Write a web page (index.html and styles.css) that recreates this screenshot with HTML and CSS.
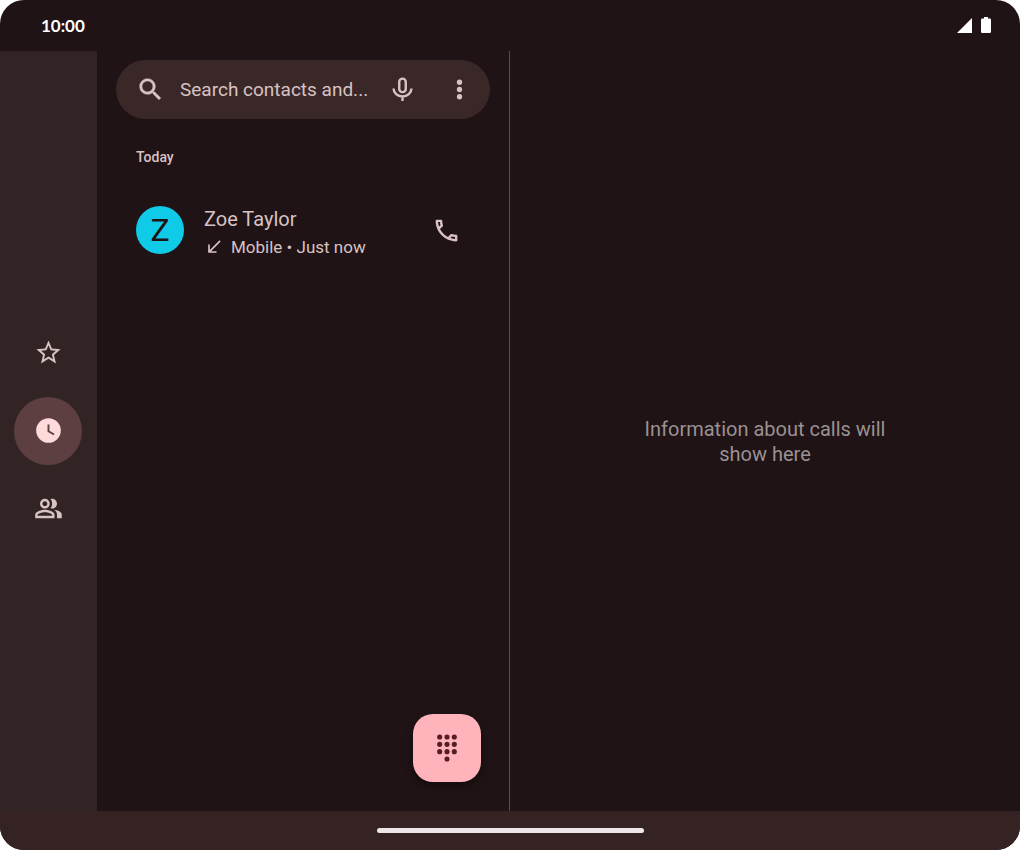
FILE: index.html
```html
<!DOCTYPE html>
<html lang="en">
<head>
  <meta charset="UTF-8" />
  <meta name="viewport" content="width=device-width, initial-scale=1.0"/>
  <title>Phone</title>
  <link rel="stylesheet" href="styles.css">
</head>
<body>

<div class="device">
  <header class="status-bar">
    <time class="clock">10:00</time>
    <div class="status-icons">
      <svg class="signal" viewBox="0 0 15 15"><path d="M15 0v15H0z"/></svg>
      <svg class="battery" viewBox="0 0 10 16"><path d="M3 0h4v1.5h1.8q1.2 0 1.2 1.2v12.1q0 1.2-1.2 1.2H1.2Q0 16 0 14.8V2.7q0-1.2 1.2-1.2H3z"/></svg>
    </div>
  </header>

  <div class="content">
    <nav class="rail">
      <a href="#favorites" aria-label="Favorites">
        <svg class="icon" viewBox="0 0 24 24"><path d="M22 9.24l-7.19-.62L12 2 9.19 8.63 2 9.24l5.46 4.73L5.82 21 12 17.27 18.18 21l-1.63-7.03L22 9.24zM12 15.4l-3.76 2.27 1-4.28-3.32-2.88 4.38-.38L12 6.1l1.71 4.04 4.38.38-3.32 2.88 1 4.28L12 15.4z"/></svg>
      </a>
      <a href="#recents" class="active" aria-label="Recents">
        <svg class="icon" viewBox="0 0 24 24"><path fill-rule="evenodd" d="M12 1.8a10.2 10.2 0 1 0 0 20.4 10.2 10.2 0 0 0 0-20.4zM11.2 7h1.6v5.2l4.2 2.5-.8 1.3-5-3z"/></svg>
      </a>
      <a href="#contacts" aria-label="Contacts">
        <svg class="icon" viewBox="0 0 24 24"><path d="M16.67 13.13C18.04 14.06 19 15.32 19 17v3h4v-3c0-2.18-3.57-3.47-6.33-3.87zM15 12c2.21 0 4-1.79 4-4s-1.79-4-4-4c-.47 0-.91.1-1.33.24C14.5 5.27 15 6.58 15 8s-.5 2.73-1.33 3.76c.42.14.86.24 1.33.24zM9 12c2.21 0 4-1.79 4-4s-1.79-4-4-4-4 1.79-4 4 1.79 4 4 4zm0-6c1.1 0 2 .9 2 2s-.9 2-2 2-2-.9-2-2 .9-2 2-2zM9 13c-2.67 0-8 1.34-8 4v3h16v-3c0-2.66-5.33-4-8-4zm6 5H3v-.99C3.2 16.29 6.3 15 9 15s5.8 1.29 6 2v1z"/></svg>
      </a>
    </nav>

    <main class="call-list">
      <form class="search" role="search">
        <svg class="icon" viewBox="0 0 24 24"><path stroke="currentColor" stroke-width=".4" d="M15.5 14h-.79l-.28-.27A6.471 6.471 0 0 0 16 9.5 6.5 6.5 0 1 0 9.5 16c1.61 0 3.09-.59 4.23-1.57l.27.28v.79l5 4.99L20.49 19l-4.99-5zm-6 0C7.01 14 5 11.99 5 9.5S7.01 5 9.5 5 14 7.01 14 9.5 11.99 14 9.5 14z"/></svg>
        <input type="text" placeholder="Search contacts and..." aria-label="Search contacts and places">
        <button type="button" aria-label="Voice search">
          <svg class="icon line" viewBox="0 0 24 24"><rect x="9.3" y="3" width="5.4" height="11.2" rx="2.7"/><path d="M4.6 11.2a7.4 6.6 0 0 0 14.8 0M12 17.8v3.7"/></svg>
        </button>
        <button type="button" aria-label="More options">
          <svg class="icon" viewBox="0 0 24 24"><circle cx="12" cy="6" r="2.2"/><circle cx="12" cy="12" r="2.2"/><circle cx="12" cy="18" r="2.2"/></svg>
        </button>
      </form>

      <h2>Today</h2>

      <div class="call">
        <div class="avatar">Z</div>
        <div class="call-info">
          <p class="name">Zoe Taylor</p>
          <p class="details">
            <svg class="incoming" viewBox="0 0 24 24"><path d="M20 5.41L18.59 4 7 15.59V9H5v10h10v-2H8.41z"/></svg>
            <span>Mobile • Just now</span>
          </p>
        </div>
        <button type="button" aria-label="Call Zoe Taylor">
          <svg class="icon" viewBox="0 0 24 24"><path d="M6.54 5c.06.89.21 1.76.45 2.59l-1.2 1.2c-.41-1.2-.67-2.47-.76-3.79h1.51m9.86 12.02c.85.24 1.72.39 2.6.45v1.49c-1.32-.09-2.59-.35-3.8-.75l1.2-1.19M7.5 3H4c-.55 0-1 .45-1 1 0 9.39 7.61 17 17 17 .55 0 1-.45 1-1v-3.49c0-.55-.45-1-1-1-1.24 0-2.45-.2-3.57-.57a.84.84 0 0 0-.31-.05c-.26 0-.51.1-.71.29l-2.2 2.2a15.149 15.149 0 0 1-6.59-6.59l2.2-2.2c.28-.28.36-.67.25-1.02A11.36 11.36 0 0 1 8.5 4c0-.55-.45-1-1-1z"/></svg>
        </button>
      </div>

      <button type="button" class="dialpad" aria-label="Dial pad">
        <svg viewBox="-0.3 -0.3 24.6 24.6">
          <circle cx="6" cy="3" r="2.1"/><circle cx="12" cy="3" r="2.1"/><circle cx="18" cy="3" r="2.1"/>
          <circle cx="6" cy="9" r="2.1"/><circle cx="12" cy="9" r="2.1"/><circle cx="18" cy="9" r="2.1"/>
          <circle cx="6" cy="15" r="2.1"/><circle cx="12" cy="15" r="2.1"/><circle cx="18" cy="15" r="2.1"/>
          <circle cx="12" cy="21" r="2.1"/>
        </svg>
      </button>
    </main>

    <section class="call-detail">
      <p>Information about calls will show here</p>
    </section>
  </div>

  <footer class="nav-bar">
    <div class="handle"></div>
  </footer>
</div>

</body>
</html>
```
FILE: styles.css
```css
* {
  margin: 0;
  padding: 0;
  box-sizing: border-box;
}

body {
  font-family: 'Roboto', sans-serif;
  background-color: #fff;
  color: #d8c2c2;
}

button {
  display: flex;
  align-items: center;
  justify-content: center;
  background: none;
  border: none;
  color: inherit;
  cursor: pointer;
}

svg {
  display: block;
  flex-shrink: 0;
  fill: currentColor;
}

.icon {
  width: 29px;
  height: 29px;
}

.line {
  fill: none;
  stroke: currentColor;
  stroke-width: 2;
}

.device {
  display: flex;
  flex-direction: column;
  min-height: 100vh;
  background-color: #1f1315;
  border-radius: 24px;
  overflow: hidden;
}

.status-bar {
  display: flex;
  justify-content: space-between;
  align-items: center;
  height: 51px;
  padding: 0 29px 1px 41px;
  color: #fff;
}

.clock {
  font-family: 'Lato', sans-serif;
  font-size: 17px;
  font-weight: bold;
}

.status-icons {
  display: flex;
  align-items: center;
  gap: 9px;
}

.signal {
  width: 15px;
  height: 15px;
}

.battery {
  width: 10px;
  height: 16px;
}

.content {
  display: flex;
  flex: 1;
}

.rail {
  display: flex;
  flex-direction: column;
  justify-content: center;
  align-items: center;
  gap: 10px;
  width: 97px;
  padding: 0 1px 1px 0;
  background-color: #322424;
}

.rail a {
  display: flex;
  align-items: center;
  justify-content: center;
  width: 68px;
  height: 68px;
  border-radius: 50%;
  color: #d8c2c2;
}

.rail a.active {
  background-color: #5d3f41;
  color: #ffdadb;
}

.call-list {
  display: flex;
  flex-direction: column;
  width: 413px;
  padding: 9px 19px 29px;
  border-right: 1px solid #5c4c4d;
}

.search {
  display: flex;
  align-items: center;
  height: 59px;
  padding: 0 16px 0 20px;
  background-color: #3a2829;
  border-radius: 30px;
}

.search input {
  flex: 1;
  min-width: 0;
  padding-left: 15px;
  font-family: inherit;
  font-size: 19px;
  color: inherit;
  background: none;
  border: none;
  outline: none;
  text-overflow: ellipsis;
}

.search input::placeholder {
  color: #d8c2c2;
  opacity: 1;
}

.search button {
  width: 29px;
  height: 48px;
}

.search button + button {
  margin-left: 28px;
}

h2 {
  padding: 28px 20px 0;
  font-size: 14px;
  line-height: 20px;
  font-weight: 500;
}

.call {
  display: flex;
  align-items: flex-start;
  gap: 20px;
  margin-top: 31px;
  padding: 8px 20px;
}

.avatar {
  display: flex;
  align-items: center;
  justify-content: center;
  width: 48px;
  height: 48px;
  border-radius: 50%;
  background-color: #0fcbe8;
  color: #201315;
  font-size: 32px;
}

.call-info {
  flex: 1;
}

.name {
  font-size: 20px;
  line-height: 26px;
}

.details {
  display: flex;
  align-items: center;
  gap: 7px;
  font-size: 17px;
  line-height: 30px;
}

.incoming {
  width: 20px;
  height: 20px;
}

.call button {
  width: 48px;
  height: 48px;
}

.dialpad {
  width: 68px;
  height: 68px;
  margin: auto 9px 0 auto;
  border-radius: 20px;
  background-color: #ffb3ba;
  color: #561d25;
  box-shadow: 0 4px 8px rgba(0, 0, 0, 0.4);
}

.dialpad svg {
  width: 30px;
  height: 30px;
}

.call-detail {
  display: flex;
  flex: 1;
  align-items: center;
  justify-content: center;
  padding-top: 22px;
}

.call-detail p {
  max-width: 250px;
  text-align: center;
  font-size: 20px;
  line-height: 25px;
  color: #9a9192;
}

.nav-bar {
  display: flex;
  align-items: center;
  justify-content: center;
  height: 39px;
  background-color: #352223;
}

.handle {
  width: 267px;
  height: 5px;
  border-radius: 3px;
  background-color: #efe6e7;
}
```
